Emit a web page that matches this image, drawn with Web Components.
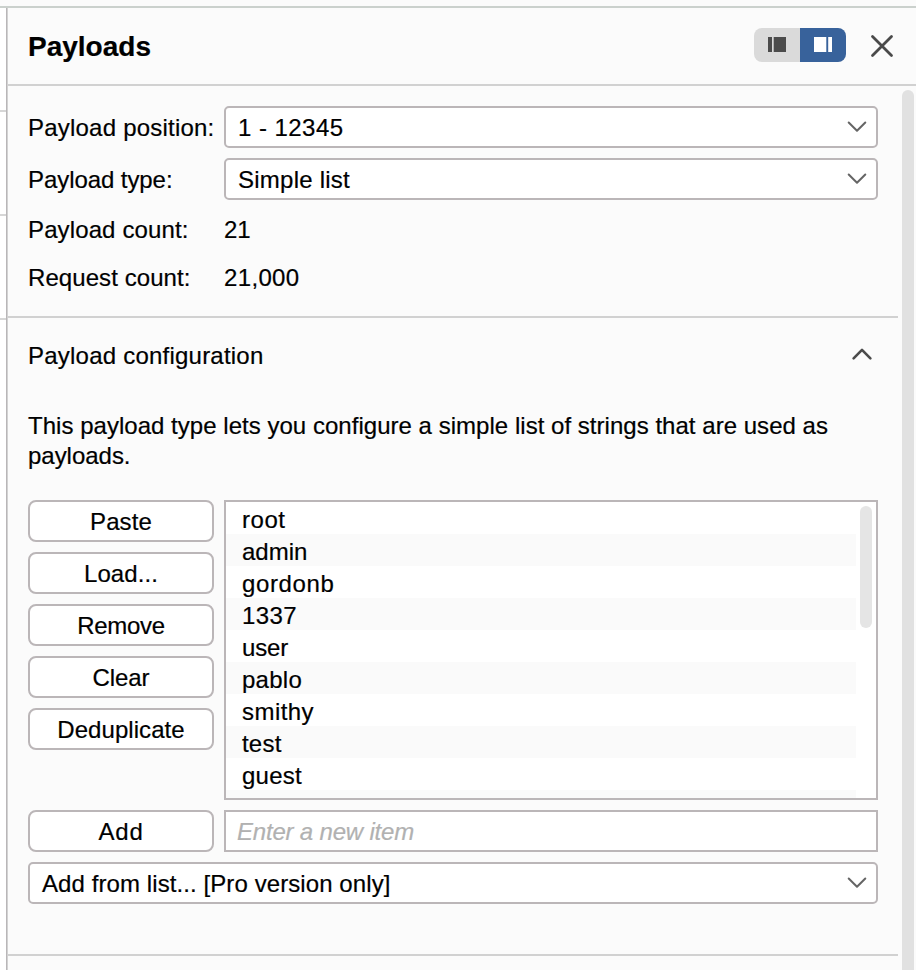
<!DOCTYPE html>
<html lang="en">
<head>
<meta charset="utf-8">
<title>Payloads</title>
<style>
  body { margin: 0; width: 916px; height: 970px; overflow: hidden; background: #fbfbfb; color: #000;
    font: 24px/30px "Liberation Sans", Arial, sans-serif; -webkit-text-stroke: .2px; }
</style>
</head>
<body>
<payloads-app></payloads-app>
<script>
const define = (name, html, setup) => customElements.define(name, class extends HTMLElement {
  connectedCallback() {
    if (this.shadowRoot) return;
    const t = document.createElement('template');
    t.innerHTML = html;
    this.attachShadow({ mode: 'open' }).append(t.content.cloneNode(true));
    if (setup) setup(this, this.shadowRoot);
  }
});

// Text run whose tracking is adjusted so that it spans the width given in "w".
define('tracked-text', `
  <style>:host { display: inline-block; white-space: nowrap; } span { display: inline-block; }</style>
  <span><slot></slot></span>`, (el, root) => {
  const span = root.querySelector('span'), w = +el.getAttribute('w');
  const n = el.textContent.length;
  span.style.letterSpacing = ((w - span.getBoundingClientRect().width) / n) + 'px';
  el.style.width = w + 'px';
});

define('push-button', `
  <style>
    :host { display: block; }
    button { all: unset; box-sizing: border-box; display: flex; align-items: center; justify-content: center;
      width: 100%; height: 42px; border: 2px solid #bbb6b8; border-radius: 8px; background: #fff; padding: 1px 0 0 0;
      -webkit-text-stroke: .2px; }
  </style>
  <button><slot></slot></button>`);

define('select-box', `
  <style>
    :host { box-sizing: border-box; display: flex; align-items: center; justify-content: space-between;
      height: 42px; border: 2px solid #bbb6b8; border-radius: 5px; background: #fff; padding: 0 9px 0 12px; }
    ::slotted(*) { padding-top: 1px; }
    svg { display: block; }
  </style>
  <slot></slot>
  <svg width="20" height="12" viewBox="0 0 20 12" fill="none" stroke="#656565" stroke-width="2" stroke-linecap="round" stroke-linejoin="round"><path d="M1.7 1.5 10 9.8l8.3-8.3"/></svg>`);

define('dock-toggle', `
  <style>
    :host { display: flex; width: 92px; height: 34px; border-radius: 8px; overflow: hidden; }
    div { flex: 1; display: flex; }
    .left { background: #dadada; } .right { background: #38629b; }
  </style>
  <div class="left"><svg width="46" height="34" fill="#4b4b4b"><path d="M14 9h4v15h-4zM19.7 9h12.3v15H19.7z"/></svg></div>
  <div class="right"><svg width="46" height="34" fill="#fff"><path d="M14 9h12.3v15H14zM28.2 9h3.8v15h-3.8z"/></svg></div>`);

define('panel-header', `
  <style>
    :host { box-sizing: border-box; display: flex; align-items: center; height: 78px; padding: 0 22px 0 20px; border-bottom: 2px solid #d1d1d1; }
    h1 { margin: 0; flex: 1; font-size: 28px; line-height: 32px; font-weight: 700; padding-top: 1px; }
    dock-toggle { margin: 0 24px 2px 0; }
  </style>
  <h1><tracked-text w="123">Payloads</tracked-text></h1>
  <dock-toggle></dock-toggle>
  <svg width="24" height="24" viewBox="0 0 24 24" fill="none" stroke="#4a4a4a" stroke-width="2.8" stroke-linecap="round"><path d="M2.5 2.5l19 19M21.5 2.5l-19 19"/></svg>`);

define('payload-summary', `
  <style>
    :host { box-sizing: border-box; display: grid; grid-template-columns: 196px 654px; grid-template-rows: 42px 42px 38px 38px;
      row-gap: 10px; align-items: center; height: 232px; padding: 20px 20px 0; border-bottom: 2px solid #d1d1d1; }
    .label { padding-top: 1px; }
    .count { padding-top: 2px; }
  </style>
  <tracked-text class="label" w="186.5">Payload position:</tracked-text><select-box><tracked-text w="105.5">1 - 12345</tracked-text></select-box>
  <tracked-text class="label" w="144.5">Payload type:</tracked-text><select-box><tracked-text w="112">Simple list</tracked-text></select-box>
  <tracked-text class="count" w="160.5">Payload count:</tracked-text><tracked-text class="count" w="26.5">21</tracked-text>
  <tracked-text class="count" w="162.5">Request count:</tracked-text><tracked-text class="count" w="75.5">21,000</tracked-text>`);

define('item-list', `
  <style>
    :host { box-sizing: border-box; display: flex; justify-content: space-between; height: 300px; overflow: hidden;
      border: 2px solid #bbb6b8; background: #fff; }
    .rows { width: 630px; }
    .rows > div { box-sizing: border-box; height: 32px; line-height: 30px; padding: 3px 0 0 16px; }
    .rows > div:nth-child(even) { background: #fafafa; }
    .thumb { width: 12px; height: 122px; border-radius: 6px; background: #e5e5e5; margin: 4px 4px 0 0; }
  </style>
  <div class="rows"></div><div class="thumb"></div>`, (el, root) => {
  const items = [['root', 43.5], ['admin', 65.5], ['gordonb', 92.5], ['1337', 55], ['user', 46], ['pablo', 60], ['smithy', 72], ['test', 39.5], ['guest', 60], ['', 0]];
  root.querySelector('.rows').innerHTML = items.map(([t, w]) => `<div>${t ? `<tracked-text w="${w}">${t}</tracked-text>` : ''}</div>`).join('');
});

define('text-entry', `
  <style>
    :host { box-sizing: border-box; display: flex; align-items: center; height: 42px; border: 2px solid #bbb6b8;
      background: #fff; color: #b1b1b1; font-style: italic; padding: 1px 0 0 11px; }
  </style>
  <slot></slot>`);

define('payload-configuration', `
  <style>
    :host { box-sizing: border-box; display: block; height: 638px; padding: 23px 20px 0; border-bottom: 2px solid #d1d1d1; }
    header { display: flex; justify-content: space-between; height: 30px; padding-right: 5px; }
    header svg { margin-top: 6px; }
    p { margin: 40px 0 29px; display: flex; flex-direction: column; }
    .grid { display: grid; grid-template-columns: 186px 654px; gap: 10px; }
    .buttons { display: flex; flex-direction: column; gap: 10px; }
    .wide { grid-column: 1 / -1; }
  </style>
  <header><tracked-text w="235.5">Payload configuration</tracked-text>
    <svg width="22" height="14" viewBox="0 0 22 14" fill="none" stroke="#4b4b4b" stroke-width="2.6" stroke-linecap="round" stroke-linejoin="round"><path d="M2.6 11.3 11 2.9l8.4 8.4"/></svg></header>
  <p><tracked-text w="800">This payload type lets you configure a simple list of strings that are used as</tracked-text><tracked-text w="102.5">payloads.</tracked-text></p>
  <div class="grid">
    <div class="buttons">
      <push-button><tracked-text w="62">Paste</tracked-text></push-button>
      <push-button><tracked-text w="74">Load...</tracked-text></push-button>
      <push-button><tracked-text w="87.5">Remove</tracked-text></push-button>
      <push-button><tracked-text w="57">Clear</tracked-text></push-button>
      <push-button><tracked-text w="127.5">Deduplicate</tracked-text></push-button>
    </div>
    <item-list></item-list>
    <push-button><tracked-text w="45">Add</tracked-text></push-button>
    <text-entry><tracked-text w="177">Enter a new item</tracked-text></text-entry>
    <select-box class="wide"><tracked-text w="348.5">Add from list... [Pro version only]</tracked-text></select-box>
  </div>`);

define('payloads-app', `
  <style>
    :host { display: grid; grid-template: 8px 962px / 6px 2px 908px; width: 916px; height: 970px; }
    .top { grid-column: 1 / -1; box-sizing: border-box; border-bottom: 2px solid #cbd1cd; }
    .gutter { background: #fff; display: flex; flex-direction: column; gap: 102px; padding-top: 102px; }
    .gutter i { height: 2px; background: #d6d6d6; }
    .edge { background: linear-gradient(90deg, #b9b6b8 50%, #d2d2d2 50%); }
    .body { display: flex; justify-content: space-between; padding-right: 2px; height: 884px; }
    .content { width: 890px; }
    .thumb { width: 12px; margin-top: 4px; background: #e1e1e1; border-radius: 6px 6px 0 0; }
  </style>
  <div class="top"></div>
  <div class="gutter"><i></i><i></i><i></i></div>
  <div class="edge"></div>
  <main><panel-header></panel-header>
    <div class="body"><div class="content"><payload-summary></payload-summary><payload-configuration></payload-configuration></div><div class="thumb"></div></div>
  </main>`);
</script>
</body>
</html>
